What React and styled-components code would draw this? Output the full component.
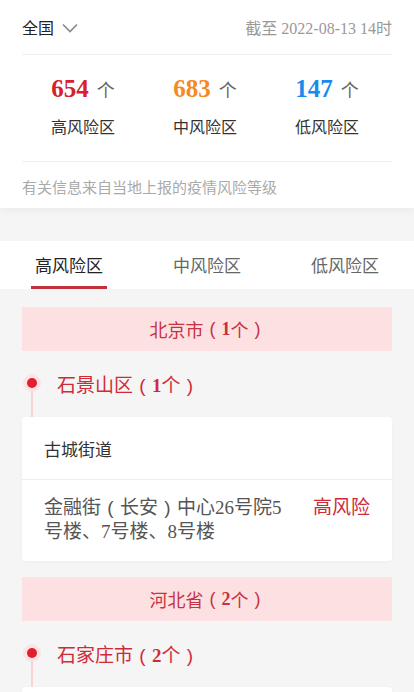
import React from 'react';
import styled, { createGlobalStyle } from 'styled-components';

const GlobalStyle = createGlobalStyle`
  html, body {
    margin: 0;
    padding: 0;
    background: #f5f5f5;
    font-family: "Liberation Serif", "Noto Sans CJK SC", serif;
  }
  * { box-sizing: border-box; }
`;

const stats = [
  { num: 654, label: '高风险区', color: '#d6202e' },
  { num: 683, label: '中风险区', color: '#f58a1f' },
  { num: 147, label: '低风险区', color: '#1a8af0' },
];

const provinces = [
  {
    name: '北京市',
    count: 1,
    cities: [
      {
        name: '石景山区',
        count: 1,
        streets: [
          {
            name: '古城街道',
            items: [{ pre: '金融街', inner: '长安', post: '中心26号院5号楼、7号楼、8号楼', level: '高风险' }],
          },
        ],
      },
    ],
  },
  {
    name: '河北省',
    count: 2,
    cities: [
      {
        name: '石家庄市',
        count: 2,
        streets: [{ name: '长安区', items: [{ pre: '广安街道', level: '高风险' }] }],
      },
    ],
  },
];

// full-width brackets drawn centred in their em box
const Bracketed = ({ children }) => (
  <>
    <Paren>(</Paren>
    {children}
    <Paren>)</Paren>
  </>
);

export default function App() {
  return (
    <Page>
      <GlobalStyle />
      <Summary>
        <TopBar>
          <Region>
            全国
            <svg width="16" height="10" viewBox="0 0 16 10">
              <path d="M1 1.5 L8 8.5 L15 1.5" fill="none" stroke="#888" strokeWidth="1.6" />
            </svg>
          </Region>
          <Updated>截至 2022-08-13 14时</Updated>
        </TopBar>
        <Stats>
          {stats.map((s) => (
            <Stat key={s.label}>
              <StatNum>
                <Num color={s.color}>{s.num}</Num>
                <Unit>个</Unit>
              </StatNum>
              <StatLabel>{s.label}</StatLabel>
            </Stat>
          ))}
        </Stats>
        <Note>有关信息来自当地上报的疫情风险等级</Note>
      </Summary>

      <Tabs>
        <Tab active>高风险区</Tab>
        <Tab>中风险区</Tab>
        <Tab>低风险区</Tab>
      </Tabs>

      <List>
        {provinces.map((p) => (
          <div key={p.name}>
            <ProvinceHead>
              {p.name}
              <Bracketed>
                <b>{p.count}</b>个
              </Bracketed>
            </ProvinceHead>
            {p.cities.map((c) => (
              <div key={c.name}>
                <CityRow>
                  <Dot />
                  <span>
                    {c.name}
                    <Bracketed>
                      <b>{c.count}</b>个
                    </Bracketed>
                  </span>
                </CityRow>
                {c.streets.map((st) => (
                  <Card key={st.name}>
                    <Street>{st.name}</Street>
                    {st.items.map((it) => (
                      <Item key={it.pre}>
                        <Addr>
                          {it.pre}
                          {it.inner && <Bracketed>{it.inner}</Bracketed>}
                          {it.post}
                        </Addr>
                        <Level>{it.level}</Level>
                      </Item>
                    ))}
                  </Card>
                ))}
              </div>
            ))}
          </div>
        ))}
      </List>
    </Page>
  );
}

const Page = styled.div`
  height: 692px;
  overflow: hidden;
  background: #f5f5f5;
`;

const Summary = styled.section`
  background: #fff;
  padding: 0 22px;
  height: 208px;
  box-shadow: 0 3px 8px rgba(0, 0, 0, 0.04);
`;

const TopBar = styled.div`
  height: 55px;
  display: flex;
  align-items: center;
  justify-content: space-between;
  border-bottom: 1px solid #eee;
`;

const Region = styled.div`
  display: flex;
  align-items: center;
  gap: 8px;
  font-size: 16px;
  color: #222;
  svg {
    margin-top: 2px;
  }
`;

const Updated = styled.div`
  font-size: 16px;
  color: #999;
`;

const Stats = styled.div`
  display: grid;
  grid-template-columns: repeat(3, 1fr);
  padding: 20px 4px 0 0;
  height: 107px;
  border-bottom: 1px solid #eee;
`;

const Stat = styled.div`
  display: flex;
  flex-direction: column;
  align-items: center;
`;

const StatNum = styled.div`
  display: flex;
  align-items: baseline;
  gap: 8px;
  height: 36px;
`;

const Num = styled.span`
  font-size: 25px;
  font-weight: bold;
  color: ${(p) => p.color};
`;

const Unit = styled.span`
  font-size: 18px;
  color: #666;
`;

const StatLabel = styled.div`
  margin-top: 3px;
  font-size: 16px;
  color: #333;
`;

const Note = styled.div`
  padding-top: 14px;
  font-size: 15px;
  color: #aaa;
`;

const Tabs = styled.nav`
  margin-top: 33px;
  display: grid;
  grid-template-columns: repeat(3, 1fr);
  background: #fff;
  height: 48px;
`;

const Tab = styled.div`
  position: relative;
  display: flex;
  justify-content: center;
  align-items: center;
  padding-bottom: 1px;
  font-size: 17px;
  color: ${(p) => (p.active ? '#222' : '#666')};
  &::after {
    content: '';
    display: ${(p) => (p.active ? 'block' : 'none')};
    position: absolute;
    bottom: 0;
    left: 31px;
    right: 31px;
    height: 3px;
    background: #c3303c;
  }
`;

const Paren = styled.span`
  display: inline-block;
  width: 1em;
  line-height: 1;
  text-align: center;
  font-family: "Liberation Sans", sans-serif;
  font-weight: normal;
`;

const List = styled.div`
  padding: 18px 22px 0;
`;

const ProvinceHead = styled.div`
  height: 44px;
  display: flex;
  align-items: center;
  justify-content: center;
  padding-left: 2px;
  background: #fde0e2;
  color: #c8323f;
  font-size: 18px;
  b {
    font-weight: bold;
  }
`;

const CityRow = styled.div`
  position: relative;
  height: 66px;
  display: flex;
  align-items: center;
  gap: 20px;
  padding-left: 5px;
  padding-bottom: 2px;
  color: #d12a37;
  font-size: 19px;
  &::after {
    content: '';
    position: absolute;
    left: 9px;
    top: 40px;
    bottom: 0;
    width: 2px;
    background: #fbd3d6;
  }
`;

const Dot = styled.span`
  width: 10px;
  height: 10px;
  border-radius: 50%;
  background: #e0202e;
  box-shadow: 0 0 0 4px #fde3e5;
`;

const Card = styled.div`
  background: #fff;
  border-radius: 4px;
  box-shadow: 0 1px 4px rgba(0, 0, 0, 0.03);
  margin-bottom: 16px;
`;

const Street = styled.div`
  height: 63px;
  display: flex;
  align-items: center;
  padding: 0 22px;
  border-bottom: 1px solid #eee;
  font-size: 17px;
  color: #333;
`;

const Item = styled.div`
  display: flex;
  justify-content: space-between;
  align-items: flex-start;
  padding: 16px 22px 17px 22px;
`;

const Addr = styled.div`
  width: 246px;
  font-size: 19px;
  line-height: 24px;
  color: #555;
`;

const Level = styled.div`
  font-size: 19px;
  line-height: 24px;
  color: #d12a37;
`;
